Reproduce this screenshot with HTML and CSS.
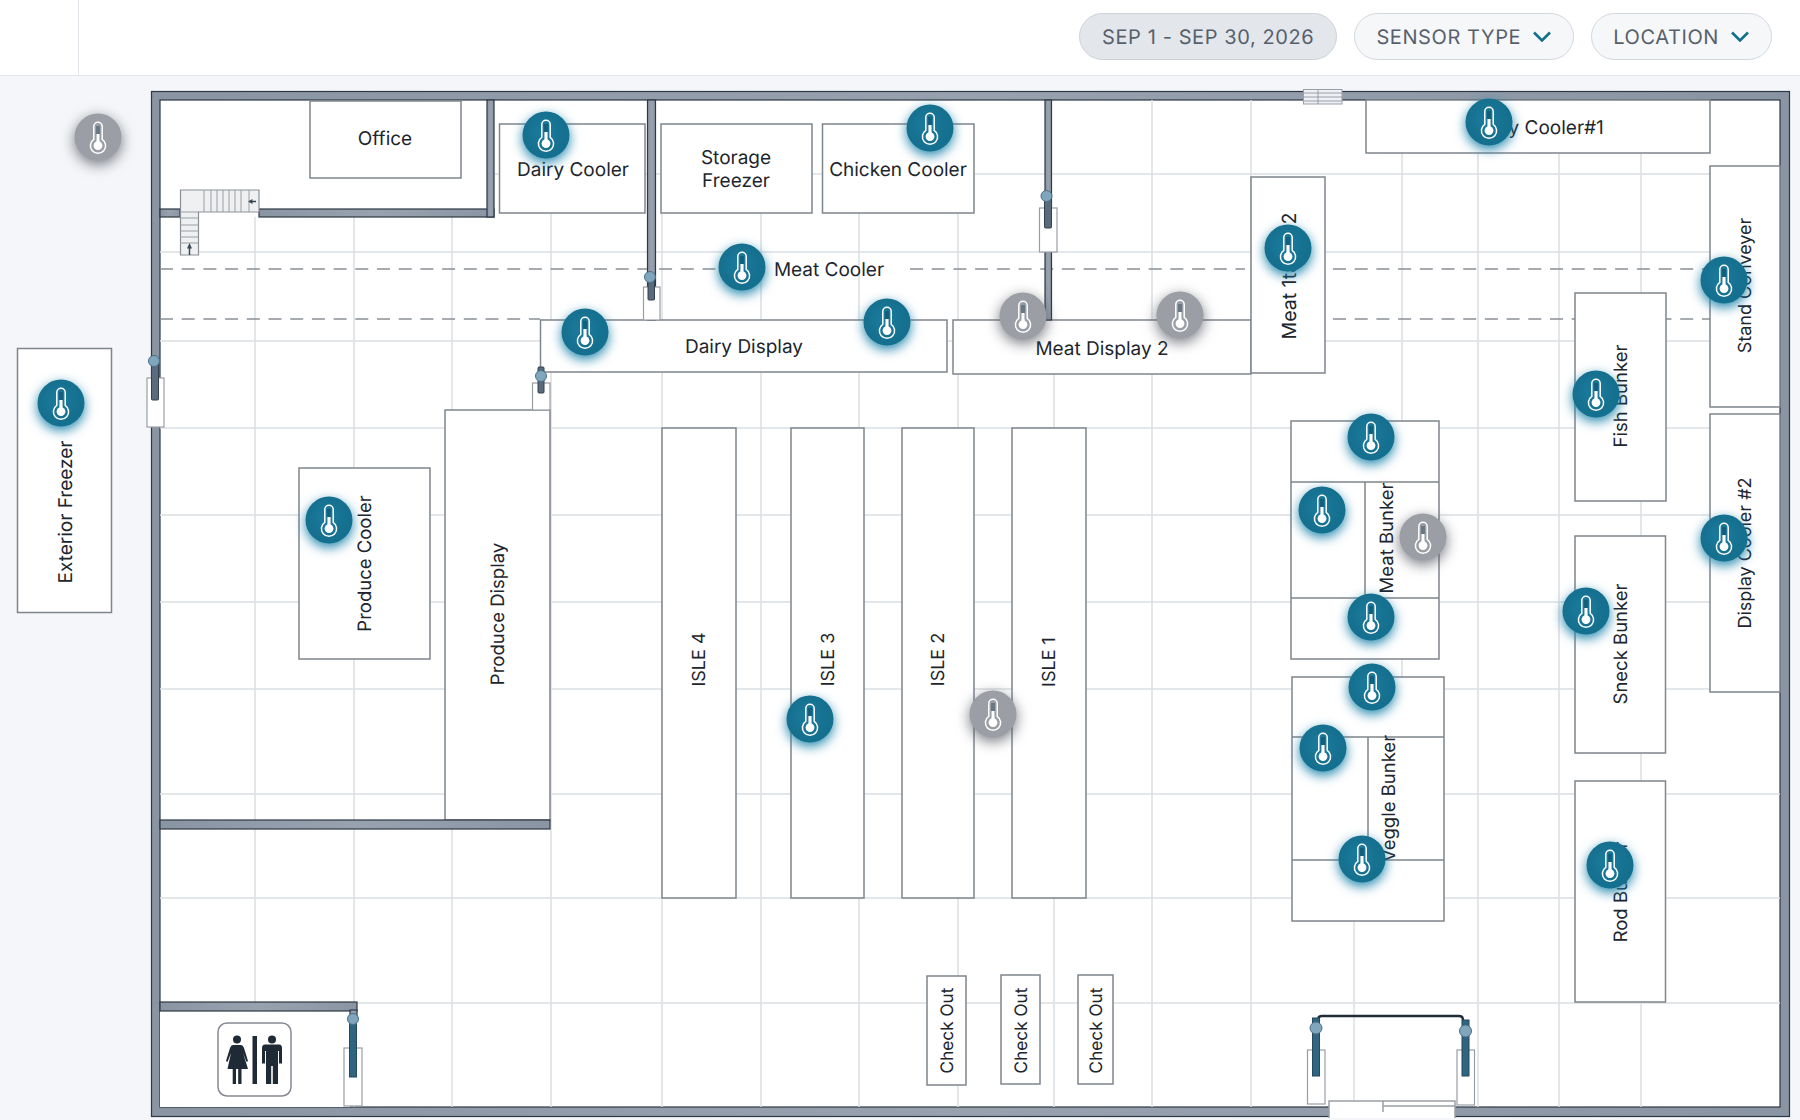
FILE: index.html
```html
<!DOCTYPE html>
<html lang="en">
<head>
<meta charset="UTF-8" />
<title>Store Floor Plan</title>
<link rel="stylesheet" href="styles.css">
</head>
<body>

<!-- Top bar -->
<header class="topbar">
  <div class="topbar-left"></div>
  <div class="filters">
    <button class="pill pill-date">SEP 1 - SEP 30, 2026</button>
    <button class="pill">SENSOR TYPE
      <svg class="chevron" viewBox="0 0 20 11"><path d="M2 1.5 10 9.5 18 1.5" /></svg>
    </button>
    <button class="pill">LOCATION
      <svg class="chevron" viewBox="0 0 20 11"><path d="M2 1.5 10 9.5 18 1.5" /></svg>
    </button>
  </div>
</header>

<!-- Floor plan -->
<svg class="plan" viewBox="0 76 1800 1044">
  <defs>
    <radialGradient id="tealFill" cx="0.45" cy="0.45" r="0.6">
      <stop offset="0" stop-color="#1b7c9f" />
      <stop offset="0.7" stop-color="#16708f" />
      <stop offset="1" stop-color="#12708f" />
    </radialGradient>
    <linearGradient id="wallFill" x1="0" y1="0" x2="1" y2="0">
      <stop offset="0" stop-color="#8a95a4" />
      <stop offset="0.5" stop-color="#98a2af" />
      <stop offset="1" stop-color="#8a95a4" />
    </linearGradient>
    <g id="thermo">
      <path class="thermo-top" d="M-2-11H2V3H-2Z" />
      <path class="thermo-fill" d="M-1.6-3H1.6V6H-1.6Z" />
      <circle class="thermo-fill" cy="8.6" r="4.4" />
      <path class="thermo-line" d="M-4.2-10.5a4.2 4.2 0 0 1 8.4 0V2.3a7.6 7.6 0 1 1-8.4 0Z" />
    </g>
    <g id="dotOn"><circle r="23.5" fill="url(#tealFill)" /><use href="#thermo" /></g>
    <g id="dotOff"><circle r="23.5" fill="#9c9ea6" /><use href="#thermo" /></g>
  </defs>

  <!-- outer shell and floor -->
  <rect class="wall" x="151.5" y="91.5" width="1638" height="1025" />
  <rect class="floor" x="160" y="100" width="1620" height="1007" />

  <!-- grid -->
  <path class="grid" d="M255 217V1107M354 217V1107M452 217V1107M551 174V1107M662 174V1107M761 174V1107M859 174V1107M958 174V1107M1054 374V1107M1152 100V1107M1251 100V1107M1354 921V1107M1402 153V921M1478 153V1107M1559 153V1107M1641 153V1107" />
  <path class="grid" d="M494 174H1780M160 252H1780M160 341H1780M160 428H1780M160 515H1780M160 602H1780M160 689H1780M160 794H1780M160 898H1780M357 1003H1780" />
  <rect class="room" x="160" y="1011" width="190" height="96" />

  <!-- aisles of dashes -->
  <path class="dash" d="M160 269H720M910 269H1245M1333 269H1710M160 319H540M1333 319H1710" />

  <!-- fixtures -->
  <rect class="box" x="310" y="101" width="151" height="77" />
  <rect class="box" x="499.5" y="124" width="145.5" height="89" />
  <rect class="box" x="661" y="124" width="151" height="89" />
  <rect class="box" x="822.5" y="124" width="151.5" height="89" />
  <rect class="box" x="1366" y="100" width="344" height="53" />
  <rect class="box" x="540.5" y="320" width="406.5" height="52" />
  <rect class="box" x="953" y="320" width="298" height="54" />
  <rect class="box" x="1251" y="177" width="74" height="196" />
  <rect class="box" x="1710" y="166" width="70" height="241" />
  <rect class="box" x="1710" y="414" width="70" height="278" />
  <rect class="box" x="1575" y="293" width="91" height="208" />
  <rect class="box" x="1575" y="536" width="90.5" height="217" />
  <rect class="box" x="1575" y="781" width="90.5" height="221" />
  <rect class="box" x="17.5" y="348.5" width="94" height="264" />
  <rect class="box" x="299" y="468" width="131" height="191" />
  <rect class="box" x="445" y="410" width="105" height="410" />
  <rect class="box" x="662" y="428" width="74" height="470" />
  <rect class="box" x="791" y="428" width="73" height="470" />
  <rect class="box" x="902" y="428" width="72" height="470" />
  <rect class="box" x="1012" y="428" width="74" height="470" />
  <rect class="box" x="927" y="976" width="39" height="109" />
  <rect class="box" x="1001" y="975" width="39" height="109" />
  <rect class="box" x="1078" y="975" width="35" height="109" />

  <rect class="box" x="1291" y="421" width="148" height="238" />
  <path class="box" d="M1291 482H1439M1291 598H1439M1365 482V598" />
  <rect class="box" x="1292" y="677" width="152" height="244" />
  <path class="box" d="M1292 737H1444M1292 860H1444M1368 737V860" />

  <!-- inner walls -->
  <rect class="wall" x="160" y="209" width="20" height="8" />
  <rect class="wall" x="259" y="209" width="235" height="8" />
  <rect class="wall" x="487" y="100" width="7" height="117" />
  <rect class="wall" x="647.5" y="100" width="8" height="220" />
  <rect class="wall" x="1045" y="100" width="6.5" height="220" />
  <rect class="wall" x="160" y="820" width="390" height="9" />
  <rect class="wall" x="160" y="1002" width="197" height="9" />
  <rect class="wall" x="350" y="1010" width="7" height="10" />

  <!-- stairs -->
  <path class="stairs" d="M180.5 190H259V212H198.5V255H180.5Z" />
  <path class="tread" d="M204 190V212M211 190V212M217 190V212M223 190V212M229 190V212M235 190V212M241 190V212M249 190V212M180.5 212H198.5M180.5 218H198.5M180.5 225H198.5M180.5 231H198.5M180.5 237H198.5M180.5 243H198.5" />
  <path class="stair-arrow" d="M256 201.5H250M189.5 255V247" />
  <path class="stair-head" d="M248 201.5 252.5 199V204ZM189.5 243 187 248.5H192Z" />

  <!-- doors -->
  <rect class="door" x="147" y="378" width="17" height="49" />
  <rect class="leaf" x="151.5" y="361" width="7" height="39" rx="1" />
  <circle class="hinge" cx="154" cy="361" r="5.5" />

  <rect class="door" x="643.5" y="287" width="16.5" height="33" />
  <rect class="leaf" x="648" y="277" width="6.5" height="23" rx="1" />
  <circle class="hinge" cx="650" cy="277" r="5.5" />

  <rect class="door" x="1039.5" y="208" width="17.5" height="44" />
  <rect class="leaf" x="1044.5" y="196" width="7" height="32" rx="1" />
  <circle class="hinge" cx="1046.5" cy="196" r="5.5" />

  <rect class="door" x="532.5" y="383" width="17.5" height="27" />
  <rect class="leaf" x="538" y="367" width="6" height="26" rx="1" />
  <circle class="hinge" cx="541" cy="376" r="5.5" />

  <rect class="door" x="344" y="1048" width="18" height="58" />
  <rect class="leaf leaf-teal" x="349.5" y="1019" width="7" height="58" />
  <circle class="hinge" cx="353" cy="1019" r="5.5" />

  <!-- main entrance -->
  <rect class="gap" x="1329" y="1101" width="126" height="17" />
  <path class="gap-line" d="M1329 1118V1101H1455V1118M1383 1101V1112M1383 1106H1455" />
  <path class="swing" d="M1318 1020Q1318 1016 1322 1016H1459Q1463 1016 1463 1020" />
  <rect class="door" x="1307.5" y="1050" width="17.5" height="54" />
  <rect class="leaf leaf-teal" x="1312.5" y="1018" width="7" height="58" />
  <circle class="hinge" cx="1316" cy="1028" r="6" />
  <rect class="door" x="1457" y="1050" width="17.5" height="55" />
  <rect class="leaf leaf-teal" x="1462" y="1020" width="7" height="56" />
  <circle class="hinge" cx="1465.5" cy="1031" r="6" />

  <!-- small panel on the north wall -->
  <rect class="panel" x="1303.5" y="89.5" width="38.5" height="14.5" />
  <path class="panel-line" d="M1318 90V104M1304 93H1342M1304 97H1342M1304 101H1342" />

  <!-- restroom sign -->
  <rect class="sign" x="218" y="1023" width="73" height="73" rx="9" />
  <g class="sign-figure">
    <circle cx="237" cy="1039.5" r="4" />
    <path d="M233 1045H241Q243 1045 244 1048L248 1061 246.5 1062 243 1053 248 1069H241.5V1084H238.2V1069H236V1084H232.7V1069H227.5L231 1053 227.5 1062 226 1061 230 1048Q231 1045 233 1045Z" />
    <rect x="252.5" y="1036" width="4.5" height="48" />
    <circle cx="272" cy="1039.5" r="4" />
    <path d="M265 1044.5H279Q282 1044.5 282 1048V1063.5H279V1051H278V1084H272.8V1066H271.2V1084H266V1051H265V1063.5H262V1048Q262 1044.5 265 1044.5Z" />
  </g>

  <!-- labels -->
  <text class="lbl" x="385" y="138">Office</text>
  <text class="lbl" x="573" y="169">Dairy Cooler</text>
  <text class="lbl" x="736" y="157">Storage</text>
  <text class="lbl" x="736" y="180">Freezer</text>
  <text class="lbl" x="898" y="169">Chicken Cooler</text>
  <text class="lbl" x="1538" y="127">Dairy Cooler#1</text>
  <text class="lbl" x="829" y="269">Meat Cooler</text>
  <text class="lbl" x="744" y="346">Dairy Display</text>
  <text class="lbl" x="1102" y="348">Meat Display 2</text>
  <text class="lbl lbl-wide" transform="translate(1289 276) rotate(-90)">Meat 1talian 2</text>
  <text class="lbl lbl-sm" transform="translate(1745 285.5) rotate(-90)">Stand Conveyer</text>
  <text class="lbl lbl-sm" transform="translate(1745 553) rotate(-90)">Display Cooler #2</text>
  <text class="lbl lbl-side" transform="translate(1621 396) rotate(-90)">Fish Bunker</text>
  <text class="lbl lbl-side" transform="translate(1621 644) rotate(-90)">Sneck Bunker</text>
  <text class="lbl lbl-side" transform="translate(1621 892) rotate(-90)">Rod Bunker</text>
  <text class="lbl lbl-side" transform="translate(1387 538) rotate(-90)">Meat Bunker</text>
  <text class="lbl lbl-side" transform="translate(1389 798.5) rotate(-90)">Veggle Bunker</text>
  <text class="lbl" transform="translate(65 512) rotate(-90)">Exterior Freezer</text>
  <text class="lbl lbl-side" transform="translate(364.5 563.5) rotate(-90)">Produce Cooler</text>
  <text class="lbl lbl-side" transform="translate(497.5 614) rotate(-90)">Produce Display</text>
  <text class="lbl lbl-sm" transform="translate(699 659.5) rotate(-90)">ISLE 4</text>
  <text class="lbl lbl-sm" transform="translate(828 659.5) rotate(-90)">ISLE 3</text>
  <text class="lbl lbl-sm" transform="translate(938 659.5) rotate(-90)">ISLE 2</text>
  <text class="lbl lbl-sm" transform="translate(1049 662) rotate(-90)">ISLE 1</text>
  <text class="lbl lbl-check" transform="translate(947 1030.5) rotate(-90)">Check Out</text>
  <text class="lbl lbl-check" transform="translate(1021 1030.5) rotate(-90)">Check Out</text>
  <text class="lbl lbl-check" transform="translate(1096 1030.5) rotate(-90)">Check Out</text>

  <!-- sensors -->
  <use class="sensor-off" href="#dotOff" x="98" y="137" />
  <use class="sensor-on" href="#dotOn" x="546" y="135" />
  <use class="sensor-on" href="#dotOn" x="930" y="128" />
  <use class="sensor-on" href="#dotOn" x="1489" y="122" />
  <use class="sensor-on" href="#dotOn" x="742" y="267" />
  <use class="sensor-on" href="#dotOn" x="585" y="332" />
  <use class="sensor-on" href="#dotOn" x="887" y="322" />
  <use class="sensor-off" href="#dotOff" x="1023" y="316" />
  <use class="sensor-off" href="#dotOff" x="1180" y="315" />
  <use class="sensor-on" href="#dotOn" x="1288" y="248" />
  <use class="sensor-on" href="#dotOn" x="1724" y="280" />
  <use class="sensor-on" href="#dotOn" x="1596" y="394" />
  <use class="sensor-on" href="#dotOn" x="1371" y="437" />
  <use class="sensor-on" href="#dotOn" x="1322" y="510" />
  <use class="sensor-off" href="#dotOff" x="1423" y="537" />
  <use class="sensor-on" href="#dotOn" x="1371" y="617" />
  <use class="sensor-on" href="#dotOn" x="1372" y="687" />
  <use class="sensor-on" href="#dotOn" x="1323" y="748" />
  <use class="sensor-on" href="#dotOn" x="1362" y="859" />
  <use class="sensor-on" href="#dotOn" x="1724" y="538" />
  <use class="sensor-on" href="#dotOn" x="1586" y="611" />
  <use class="sensor-on" href="#dotOn" x="1610" y="865" />
  <use class="sensor-on" href="#dotOn" x="61" y="403" />
  <use class="sensor-on" href="#dotOn" x="329" y="520" />
  <use class="sensor-on" href="#dotOn" x="810" y="719" />
  <use class="sensor-off" href="#dotOff" x="993" y="714" />
</svg>

</body>
</html>
```

FILE: styles.css
```css
/* Page */
body {
  margin: 0;
  background: #f4f6f9;
  font-family: 'Inter', sans-serif;
  overflow: hidden;
}

/* Top bar */
.topbar {
  display: flex;
  justify-content: space-between;
  align-items: center;
  height: 75px;
  background: #fff;
  border-bottom: 1px solid #e3e6ea;
}
.topbar-left {
  width: 78px;
  height: 100%;
  border-right: 1px solid #e3e6ea;
}
.filters {
  display: flex;
  gap: 17px;
  padding: 0 28px 2px 0;
}
.pill {
  display: flex;
  align-items: center;
  gap: 11px;
  height: 47px;
  padding: 0 21px;
  border: 1.5px solid #d3d7dd;
  border-radius: 24px;
  background: #f6f7f9;
  color: #56606b;
  font-family: 'Inter', sans-serif;
  font-size: 20px;
  letter-spacing: 0.6px;
  text-rendering: geometricPrecision;
}
.pill-date {
  padding: 0 22px;
  background: #e3e6eb;
  border-color: #cdd2d9;
}
.chevron {
  width: 20px;
  height: 11px;
  fill: none;
  stroke: #12708a;
  stroke-width: 2.6;
}

/* Floor plan */
.plan {
  display: block;
  width: 1800px;
  height: 1044px;
}
.wall {
  fill: url(#wallFill);
  stroke: #2d3844;
  stroke-width: 1.2;
}
.floor {
  fill: #fff;
  stroke: #2d3844;
  stroke-width: 1.2;
}
.room {
  fill: #fff;
}
.grid {
  fill: none;
  stroke: #dcdfe4;
  stroke-width: 1.5;
}
.dash {
  fill: none;
  stroke: #8b9096;
  stroke-width: 1.5;
  stroke-dasharray: 13 8.7;
}
.box {
  fill: #fff;
  stroke: #7f858c;
  stroke-width: 1.5;
}
path.box {
  fill: none;
}
.lbl {
  fill: #1d252d;
  font-family: 'Inter', sans-serif;
  font-size: 19px;
  text-anchor: middle;
  dominant-baseline: central;
  text-rendering: geometricPrecision;
}
.lbl-side {
  font-size: 18.5px;
}
.lbl-sm {
  font-size: 18px;
}
.lbl-check {
  font-size: 17.2px;
}
.lbl-wide {
  font-size: 19.5px;
}

/* Stairs */
.stairs {
  fill: #eff0f2;
  stroke: #8b9096;
  stroke-width: 1.2;
}
.tread {
  fill: none;
  stroke: #9a9ea5;
  stroke-width: 1;
}
.stair-arrow {
  fill: none;
  stroke: #3d4854;
  stroke-width: 1.5;
}
.stair-head {
  fill: #3d4854;
}

/* Doors */
.door {
  fill: #fff;
  stroke: #999ea5;
  stroke-width: 1.2;
}
.leaf {
  fill: #5a6b7d;
  stroke: #33404d;
  stroke-width: 1;
}
.leaf-teal {
  fill: #2f6580;
  stroke: #24485c;
}
.hinge {
  fill: #7fa6bd;
  stroke: #4c6f85;
  stroke-width: 1;
}
.gap {
  fill: #fff;
}
.gap-line {
  fill: none;
  stroke: #9a9ea5;
  stroke-width: 1.5;
}
.swing {
  fill: none;
  stroke: #222c36;
  stroke-width: 2.4;
}
.panel {
  fill: #eef0f3;
  stroke: #9aa0a7;
  stroke-width: 1;
}
.panel-line {
  fill: none;
  stroke: #868c94;
  stroke-width: 0.8;
}

/* Restroom sign */
.sign {
  fill: #fff;
  stroke: #85898f;
  stroke-width: 1.5;
}
.sign-figure {
  fill: #1e2a35;
}

/* Sensors */
.sensor-on {
  filter: drop-shadow(0 4px 6px rgba(25, 130, 170, 0.95));
}
.sensor-off {
  filter: drop-shadow(0 4px 7px rgba(85, 88, 98, 0.8));
}
.thermo-line {
  fill: none;
  stroke: #fff;
  stroke-width: 1.5;
}
.thermo-fill {
  fill: #fff;
}
.thermo-top {
  fill: rgba(10, 50, 70, 0.35);
}
```
